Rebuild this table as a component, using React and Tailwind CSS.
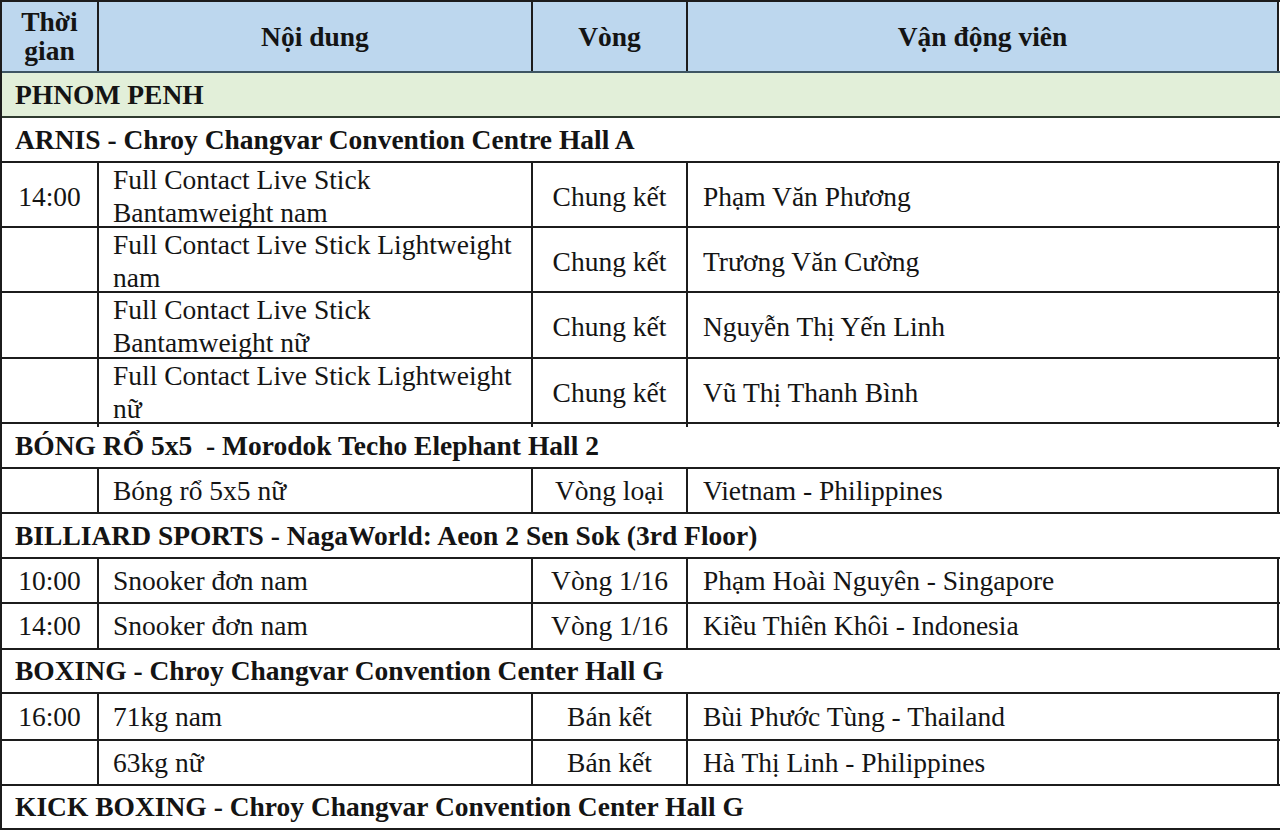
import React from "react";

const rows = [
  { type: "section", text: "PHNOM PENH", h: "h-[45px]", green: true },
  { type: "section", text: "ARNIS - Chroy Changvar Convention Centre Hall A", h: "h-[45px]" },
  { type: "data", h: "h-[65px]", t: "14:00", c: ["Full Contact Live Stick", "Bantamweight nam"], v: "Chung kết", a: "Phạm Văn Phương" },
  { type: "data", h: "h-[65px]", t: "", c: ["Full Contact Live Stick Lightweight", "nam"], v: "Chung kết", a: "Trương Văn Cường" },
  { type: "data", h: "h-[66px]", t: "", c: ["Full Contact Live Stick", "Bantamweight nữ"], v: "Chung kết", a: "Nguyễn Thị Yến Linh" },
  { type: "data", h: "h-[65px]", t: "", c: ["Full Contact Live Stick Lightweight", "nữ"], v: "Chung kết", a: "Vũ Thị Thanh Bình" },
  { type: "section", text: "BÓNG RỔ 5x5  - Morodok Techo Elephant Hall 2", h: "h-[45px]" },
  { type: "data", h: "h-[45px]", t: "", c: ["Bóng rổ 5x5 nữ"], v: "Vòng loại", a: "Vietnam - Philippines" },
  { type: "section", text: "BILLIARD SPORTS - NagaWorld: Aeon 2 Sen Sok (3rd Floor)", h: "h-[45px]" },
  { type: "data", h: "h-[45px]", t: "10:00", c: ["Snooker đơn nam"], v: "Vòng 1/16", a: "Phạm Hoài Nguyên - Singapore" },
  { type: "data", h: "h-[46px]", t: "14:00", c: ["Snooker đơn nam"], v: "Vòng 1/16", a: "Kiều Thiên Khôi - Indonesia" },
  { type: "section", text: "BOXING - Chroy Changvar Convention Center Hall G", h: "h-[44px]" },
  { type: "data", h: "h-[47px]", t: "16:00", c: ["71kg nam"], v: "Bán kết", a: "Bùi Phước Tùng - Thailand" },
  { type: "data", h: "h-[45px]", t: "", c: ["63kg nữ"], v: "Bán kết", a: "Hà Thị Linh - Philippines" },
  { type: "section", text: "KICK BOXING - Chroy Changvar Convention Center Hall G", h: "h-[44px]" },
];

function T({ children, className = "" }) {
  return <span className={"inline-block scale-y-[0.96] whitespace-pre " + className}>{children}</span>;
}

const grid = "grid grid-cols-[97px_434px_155px_591px]";
const cell = "border-r-2 border-[#1c1c1c] flex items-center";

export default function App() {
  return (
    <div className="w-[1280px] h-[831px] bg-white overflow-hidden text-[#141414] font-[family-name:Liberation_Serif,Times_New_Roman,serif] text-[27.5px] leading-[34px]">
      <div className="border-t-2 border-l-2 border-[#1c1c1c]">
        {/* header */}
        <div className={grid + " h-[71px] border-b-2 border-[#3e5563] font-bold"}>
          <div className={cell + " justify-center bg-[#bdd7ee] text-center leading-[30px]"}>
            <T>{"Thời\ngian"}</T>
          </div>
          <div className={cell + " justify-center bg-[#bdd7ee]"}>
            <T>Nội dung</T>
          </div>
          <div className={cell + " justify-center bg-[#bdd7ee]"}>
            <T>Vòng</T>
          </div>
          <div className={cell + " justify-center bg-[#bdd7ee]"}>
            <T>Vận động viên</T>
          </div>
        </div>
        {rows.map((r, i) =>
          r.type === "section" ? (
            <div
              key={i}
              className={
                r.h +
                " flex items-center pl-[13px] font-bold border-b-2 " +
                (r.green ? "bg-[#e2efd9] border-[#2e3a2e]" : "bg-white border-[#1c1c1c]")
              }
            >
              <T>{r.text}</T>
            </div>
          ) : (
            <div key={i} className={grid + " " + r.h + " border-b-2 border-[#1c1c1c]"}>
              <div className={cell + " justify-center"}>
                <T>{r.t}</T>
              </div>
              <div className={cell + " pl-[14px]"}>
                <T>{r.c.join("\n")}</T>
              </div>
              <div className={cell + " justify-center"}>
                <T>{r.v}</T>
              </div>
              <div className={cell + " pl-[15px]"}>
                <T>{r.a}</T>
              </div>
            </div>
          )
        )}
      </div>
    </div>
  );
}
